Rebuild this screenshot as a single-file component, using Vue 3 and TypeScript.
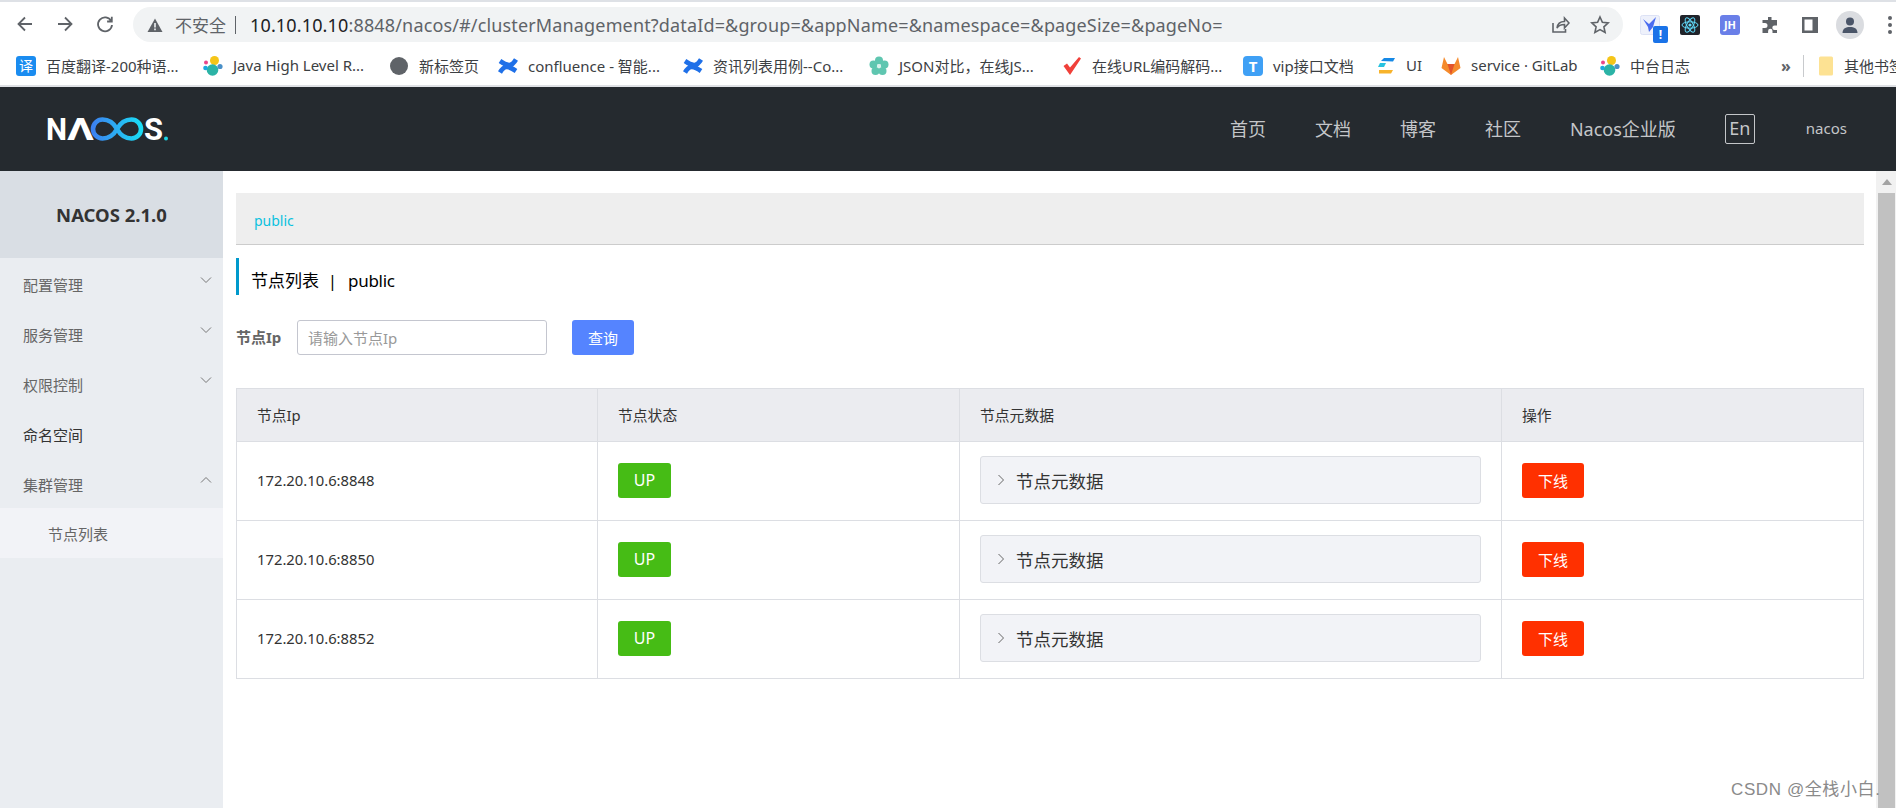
<template>
  <div class="page">
    <div class="tab-strip"></div>
    <div class="toolbar">
      <div class="nav-btns">
        <svg viewBox="0 0 20 20" class="nav-icon"><path d="M17 10H4M10 3.500 3.500 10l6.500 6.500" /></svg>
        <svg viewBox="0 0 20 20" class="nav-icon"><path d="M3 10h13M10 3.500l6.500 6.500-6.500 6.500" /></svg>
        <svg viewBox="0 0 20 20" class="nav-icon"><path d="M16.200 7A7 7 0 1 0 17 11M16.800 2.800V7.500h-4.700" /></svg>
      </div>
      <div class="address">
        <svg viewBox="0 0 16 16" class="warn"><path d="M8 1.500 15.500 15H.5z" fill="#5f6368" /><path d="M7.200 6h1.600v4.600H7.200zM7.200 11.600h1.600v1.600H7.200z" fill="#f1f3f4" /></svg>
        <span class="insecure">不安全</span>
        <span class="divider"></span>
        <span class="url"><b>10.10.10.10</b>:8848/nacos/#/clusterManagement?dataId=&amp;group=&amp;appName=&amp;namespace=&amp;pageSize=&amp;pageNo=</span>
        <svg viewBox="0 0 20 20" class="addr-icon"><path d="M3 8v9h12.500v-3M7 13c.5-4 3-6.500 7.500-6.500V3l4.500 5-4.500 5V9.500C11 9.500 8.500 10.500 7 13z" /></svg>
        <svg viewBox="0 0 20 20" class="addr-icon star"><path d="m10 2 2.400 5.300 5.800.6-4.300 3.900 1.200 5.700-5.100-2.900-5.100 2.900 1.200-5.700L1.800 7.900l5.800-.6z" /></svg>
      </div>
      <div class="ext-row">
        <div class="ext ext-bird">
          <svg viewBox="0 0 20 20"><rect x="0.500" y="0.500" width="19" height="19" rx="2" fill="#eef1fb" stroke="#dde2f5" /><path d="M3 4l6 5 7-7-3 10-4 5-1-5z" fill="#4a6cf0" /></svg>
          <span class="ext-badge">!</span>
        </div>
        <svg viewBox="0 0 20 20" class="ext"><rect width="20" height="20" rx="2" fill="#20232a" /><g fill="none" stroke="#61dafb" stroke-width="1"><ellipse cx="10" cy="10" rx="8" ry="3.200" /><ellipse cx="10" cy="10" rx="8" ry="3.200" transform="rotate(60 10 10)" /><ellipse cx="10" cy="10" rx="8" ry="3.200" transform="rotate(120 10 10)" /></g><circle cx="10" cy="10" r="1.600" fill="#61dafb" /></svg>
        <div class="ext ext-jh">JH</div>
        <svg viewBox="0 0 20 20" class="ext"><path d="M8 2h3.500v3H17v5.500h-2.500a2.200 2.200 0 0 0 0 4.400H17V18H12.500v-2a2.200 2.200 0 0 0-4.400 0v2H2.500v-5H5a2.500 2.500 0 0 0 0-5H2.500V5H8z" fill="#5f6368" /></svg>
        <svg viewBox="0 0 20 20" class="ext"><path d="M2 2h16v16H2zM12.500 4.500h-8v11h8z" fill="#5f6368" fill-rule="evenodd" /></svg>
        <div class="avatar">
          <svg viewBox="0 0 20 20"><circle cx="10" cy="6.500" r="4" fill="#4a5568" /><path d="M2.500 18c0-4.500 3.500-6 7.500-6s7.500 1.500 7.500 6z" fill="#4a5568" /></svg>
        </div>
        <div class="dots"><i></i><i></i><i></i></div>
      </div>
    </div>

    <div class="bookmarks">
      <div v-for="b in bookmarks" :key="b.text" class="bm" :style="{ width: b.w + 'px' }">
        <div v-if="b.kind === 'fanyi'" class="bm-icon bm-fanyi">译</div>
        <svg v-else-if="b.kind === 'elastic'" viewBox="0 0 20 20" class="bm-icon"><circle cx="11.500" cy="4.500" r="4.500" fill="#f5c518" /><circle cx="9.500" cy="14" r="5.800" fill="#2bb3a6" /><circle cx="3" cy="6.500" r="2" fill="#e8478b" /><circle cx="2.500" cy="12" r="2.300" fill="#1ba9e0" /><circle cx="17" cy="10.500" r="2.600" fill="#4a90c8" /></svg>
        <svg v-else-if="b.kind === 'circle'" viewBox="0 0 20 20" class="bm-icon"><circle cx="10" cy="10" r="9" fill="#5f6368" /></svg>
        <svg v-else-if="b.kind === 'confluence'" viewBox="0 0 20 20" class="bm-icon"><path d="M2 16.500C6 9.500 10 9.500 18 15M18 3.500C14 10.500 10 10.500 2 5" fill="none" stroke="#1f70e8" stroke-width="4.600" /></svg>
        <svg v-else-if="b.kind === 'flower'" viewBox="0 0 20 20" class="bm-icon"><g fill="#5fc6b0"><circle cx="10" cy="4.500" r="4" /><circle cx="4.500" cy="8.500" r="4" /><circle cx="15.500" cy="8.500" r="4" /><circle cx="6.500" cy="15" r="4" /><circle cx="13.500" cy="15" r="4" /></g><circle cx="10" cy="10" r="2" fill="#d8f2ec" /></svg>
        <svg v-else-if="b.kind === 'check'" viewBox="0 0 20 20" class="bm-icon"><path d="M1.500 10 5 7.500l3 4L17 1l2 1.500L8 19z" fill="#f0403a" /></svg>
        <div v-else-if="b.kind === 'tee'" class="bm-icon bm-tee">T</div>
        <svg v-else-if="b.kind === 'ui'" viewBox="0 0 20 20" class="bm-icon"><path d="M5 5 8 2h11l-2 3.500z" fill="#1689e6" /><path d="M2 11l2-4h6l-2 4z" fill="#27c2e0" /><path d="M3 14h14l-2 3.500H3z" fill="#f7b32b" /></svg>
        <svg v-else-if="b.kind === 'gitlab'" viewBox="0 0 20 20" class="bm-icon"><path d="M10 19 .5 12 3 1l3.500 7h7L17 1l2.500 11z" fill="#f58b2c" /><path d="M10 19 6.500 8h7z" fill="#e2532b" /></svg>
        <span class="bm-text">{{ b.text }}</span>
      </div>
      <span class="bm-more">»</span>
      <span class="bm-sep"></span>
      <svg viewBox="0 0 14 20" class="bm-folder"><path d="M0 2A1.500 1.500 0 0 1 1.500.5h11A1.500 1.500 0 0 1 14 2v16a1.500 1.500 0 0 1-1.500 1.500h-11A1.500 1.500 0 0 1 0 18z" fill="#fde293" /></svg>
      <span class="bm-text">其他书签</span>
    </div>

    <header class="topbar">
      <svg class="logo" viewBox="-4 -10 126 44" role="img" aria-label="NACOS">
        <defs>
          <linearGradient id="loop" x1="0" x2="1" y1="0" y2="0">
            <stop offset="0" stop-color="#3c82f0" />
            <stop offset="1" stop-color="#1adcf5" />
          </linearGradient>
        </defs>
        <text x="-2" y="23" class="logo-text" textLength="21" lengthAdjust="spacingAndGlyphs">N</text>
        <text x="19" y="23" class="logo-text" textLength="27" lengthAdjust="spacingAndGlyphs">Λ</text>
        <path d="M69 12C64 3 58 2.500 54.500 2.500a9.500 9.500 0 0 0 0 19C58 21.500 64 21 69 12s11-9.500 14.500-9.500a9.500 9.500 0 0 1 0 19C80 21.500 74 21 69 12z" fill="none" stroke="url(#loop)" stroke-width="4.600" />
        <text x="96" y="23" class="logo-text" textLength="19" lengthAdjust="spacingAndGlyphs">S</text>
        <circle cx="118" cy="21.500" r="2" fill="#1fd6e6" />
      </svg>
      <nav class="topnav">
        <a>首页</a>
        <a>文档</a>
        <a>博客</a>
        <a>社区</a>
        <a>Nacos企业版</a>
      </nav>
      <span class="lang">En</span>
      <span class="user">nacos</span>
    </header>

    <div class="body">
      <aside class="sidebar">
        <div class="side-title">NACOS 2.1.0</div>
        <div v-for="m in menu" :key="m.label" class="side-item" :class="{ plain: !m.arrow }">
          <span>{{ m.label }}</span>
          <svg v-if="m.arrow" viewBox="0 0 12 8" class="chev" :class="{ flip: m.arrow === 'up' }"><path d="M1 1.500 6 6.500l5-5" /></svg>
        </div>
        <div class="side-sub">节点列表</div>
      </aside>

      <main class="content">
        <div class="ns-bar"><a>public</a></div>
        <h1 class="title">节点列表&nbsp; |&nbsp; <span class="title-ns">public</span></h1>
        <div class="search">
          <label>节点Ip</label>
          <input type="text" placeholder="请输入节点Ip" />
          <button class="query">查询</button>
        </div>
        <table class="grid">
          <colgroup>
            <col class="c-ip" />
            <col class="c-state" />
            <col class="c-meta" />
            <col />
          </colgroup>
          <thead>
            <tr>
              <th>节点Ip</th>
              <th>节点状态</th>
              <th>节点元数据</th>
              <th>操作</th>
            </tr>
          </thead>
          <tbody>
            <tr v-for="n in nodes" :key="n">
              <td>{{ n }}</td>
              <td><span class="state-up">UP</span></td>
              <td>
                <div class="collapse">
                  <svg viewBox="0 0 8 12" class="arrow"><path d="M1.500 1 6.500 6l-5 5" /></svg>
                  <span>节点元数据</span>
                </div>
              </td>
              <td><button class="offline">下线</button></td>
            </tr>
          </tbody>
        </table>
      </main>

      <div class="scrollbar">
        <div class="sb-up"></div>
        <div class="sb-thumb"></div>
      </div>
    </div>

    <div class="watermark">CSDN @全栈小白.</div>
  </div>
</template>

<script setup lang="ts">
interface Bookmark {
  kind: string
  text: string
  w: number
}

interface MenuItem {
  label: string
  arrow?: 'up' | 'down'
}

const bookmarks: Bookmark[] = [
  { kind: 'fanyi', text: '百度翻译-200种语...', w: 187 },
  { kind: 'elastic', text: 'Java High Level R...', w: 186 },
  { kind: 'circle', text: '新标签页', w: 109 },
  { kind: 'confluence', text: 'confluence - 智能...', w: 185 },
  { kind: 'confluence', text: '资讯列表用例--Co...', w: 186 },
  { kind: 'flower', text: 'JSON对比，在线JS...', w: 193 },
  { kind: 'check', text: '在线URL编码解码...', w: 181 },
  { kind: 'tee', text: 'vip接口文档', w: 133 },
  { kind: 'ui', text: 'UI', w: 65 },
  { kind: 'gitlab', text: 'service · GitLab', w: 159 },
  { kind: 'elastic', text: '中台日志', w: 181 }
]

const menu: MenuItem[] = [
  { label: '配置管理', arrow: 'down' },
  { label: '服务管理', arrow: 'down' },
  { label: '权限控制', arrow: 'down' },
  { label: '命名空间' },
  { label: '集群管理', arrow: 'up' }
]

const nodes = ['172.20.10.6:8848', '172.20.10.6:8850', '172.20.10.6:8852']
</script>

<style>
html,
body {
  margin: 0;
  overflow: hidden;
}
</style>

<style scoped>
.page {
  position: relative;
  height: 808px;
  display: flex;
  flex-direction: column;
  overflow: hidden;
  background: #fff;
  font-family: "Noto Sans", "Noto Sans CJK SC", sans-serif;
}

.tab-strip {
  height: 2px;
  background: #dee1e6;
}

.toolbar {
  height: 45px;
  display: flex;
  align-items: flex-start;
  padding-top: 5px;
  box-sizing: border-box;
}

.nav-btns {
  width: 133px;
  padding-left: 15px;
  box-sizing: border-box;
  display: flex;
  gap: 20px;
  padding-top: 7px;
}

.nav-icon {
  width: 20px;
  height: 20px;
  fill: none;
  stroke: #5f6368;
  stroke-width: 1.8;
}

.address {
  width: 1490px;
  height: 35px;
  border-radius: 18px;
  background: #f1f3f4;
  display: flex;
  align-items: center;
  color: #5f6368;
}

.warn {
  width: 16px;
  height: 16px;
  margin-left: 14px;
}

.insecure {
  margin-left: 12px;
  font-size: 17px;
}

.divider {
  width: 1px;
  height: 18px;
  background: #5f6368;
  margin: 0 14px 0 9px;
}

.url {
  font-size: 18px;
  letter-spacing: 0.15px;
  flex: 1;
  white-space: nowrap;
}

.url b {
  font-weight: 400;
  color: #202124;
}

.addr-icon {
  width: 20px;
  height: 20px;
  fill: none;
  stroke: #5f6368;
  stroke-width: 1.6;
  margin-right: 20px;
}

.star {
  margin-right: 13px;
}

.ext-row {
  display: flex;
  align-items: center;
  height: 35px;
  margin-left: 17px;
  gap: 20px;
}

.ext {
  width: 20px;
  height: 20px;
  flex: none;
}

.ext-bird {
  position: relative;
}

.ext-bird svg {
  display: block;
}

.ext-badge {
  position: absolute;
  right: -8px;
  bottom: -8px;
  width: 15px;
  height: 17px;
  border-radius: 2px;
  background: #1a73e8;
  color: #fff;
  font-size: 12px;
  font-weight: 700;
  line-height: 17px;
  text-align: center;
}

.ext-jh {
  border-radius: 3px;
  background: #6a7fe8;
  color: #fff;
  font-size: 11px;
  font-weight: 700;
  line-height: 20px;
  text-align: center;
}

.avatar {
  width: 28px;
  height: 28px;
  margin-left: -4px;
  border-radius: 50%;
  background: #dadce0;
  display: flex;
  align-items: center;
  justify-content: center;
}

.avatar svg {
  width: 20px;
  height: 20px;
}

.dots {
  display: flex;
  flex-direction: column;
  gap: 3px;
  margin-left: 4px;
}

.dots i {
  width: 4px;
  height: 4px;
  border-radius: 50%;
  background: #5f6368;
}

.bookmarks {
  height: 38px;
  padding-left: 16px;
  display: flex;
  align-items: center;
  border-bottom: 2px solid #dfe1e5;
  font-size: 15px;
  color: #3c4043;
}

.bm {
  display: flex;
  align-items: center;
  gap: 10px;
  flex: none;
}

.bm-icon {
  width: 20px;
  height: 20px;
  flex: none;
}

.bm-fanyi {
  border-radius: 3px;
  background: #1a8cf0;
  color: #fff;
  font-size: 14px;
  line-height: 20px;
  text-align: center;
}

.bm-tee {
  border-radius: 4px;
  background: #3fa0f5;
  color: #fff;
  font-size: 15px;
  font-weight: 700;
  line-height: 20px;
  text-align: center;
}

.bm-text {
  margin-top: -2px;
  white-space: nowrap;
}

.bm-more {
  width: 22px;
  flex: none;
  font-size: 16px;
  font-weight: 700;
  color: #5f6368;
}

.bm-sep {
  width: 1px;
  height: 22px;
  flex: none;
  background: #c8cacd;
  margin-right: 15px;
}

.bm-folder {
  width: 14px;
  height: 20px;
  margin-right: 11px;
  flex: none;
}

.topbar {
  height: 84px;
  flex: none;
  background: #252a2f;
  display: flex;
  align-items: center;
  padding-left: 44px;
  color: #c4c6c9;
}

.logo {
  width: 126px;
  height: 44px;
}

.logo-text {
  font-family: Roboto, sans-serif;
  font-size: 32px;
  font-weight: 700;
  fill: #fff;
}

.topnav {
  margin-left: auto;
  display: flex;
  gap: 49px;
  margin-top: -3px;
  font-size: 18px;
}

.lang {
  margin-left: 49px;
  width: 30px;
  height: 30px;
  box-sizing: border-box;
  border: 1px solid #c4c6c9;
  border-radius: 2px;
  font-size: 18px;
  line-height: 26px;
  text-align: center;
}

.user {
  margin-left: 51px;
  margin-right: 49px;
  font-size: 15px;
  margin-top: -2px;
}

.body {
  flex: 1;
  display: flex;
  min-height: 0;
}

.sidebar {
  width: 223px;
  flex: none;
  background: #eaedf1;
  font-size: 15px;
  color: #666;
}

.side-title {
  height: 87px;
  background: #d9dee4;
  color: #333;
  font-size: 18.500px;
  font-weight: 700;
  line-height: 87px;
  text-align: center;
}

.side-item {
  height: 50px;
  padding: 0 11px 0 23px;
  display: flex;
  align-items: center;
  justify-content: space-between;
}

.side-item span {
  margin-top: 2px;
}

.side-item.plain {
  color: #333;
}

.chev {
  width: 12px;
  height: 8px;
  margin-top: -6px;
  fill: none;
  stroke: #777;
  stroke-width: 1;
}

.chev.flip {
  transform: rotate(180deg);
}

.side-sub {
  height: 50px;
  padding-left: 48px;
  background: #f2f3f7;
  line-height: 52px;
}

.content {
  flex: 1;
  min-width: 0;
  padding: 22px 12px 0 13px;
}

.ns-bar {
  height: 52px;
  box-sizing: border-box;
  padding: 18px 0 0 18px;
  background: #eee;
  border-bottom: 1px solid #ccc;
  font-size: 14px;
  line-height: 20px;
  color: #09c1de;
}

.title {
  margin: 13px 0 0;
  height: 37px;
  box-sizing: border-box;
  padding: 8px 0 0 12px;
  border-left: 3px solid #09c;
  font-size: 17px;
  font-weight: 400;
  line-height: 29px;
  color: #000;
}

.title-ns {
  margin-left: 2px;
  letter-spacing: -0.3px;
}

.search {
  margin-top: 25px;
  display: flex;
  align-items: center;
  height: 35px;
}

.search label {
  width: 61px;
  margin-top: -2px;
  font-size: 15px;
  font-weight: 700;
  color: #666;
}

.search input {
  width: 250px;
  height: 35px;
  box-sizing: border-box;
  padding: 0 10px;
  border: 1px solid #c4c6cf;
  border-radius: 3px;
  font-family: inherit;
  font-size: 15px;
  outline: none;
}

.search input::placeholder {
  color: #999;
}

.query {
  margin-left: 25px;
  width: 62px;
  height: 35px;
  border: none;
  border-radius: 3px;
  background: #5584ff;
  color: #fff;
  font-family: inherit;
  font-size: 15px;
}

.grid {
  margin-top: 33px;
  width: 100%;
  table-layout: fixed;
  border-collapse: collapse;
  font-size: 14.800px;
  color: #333;
}

.c-ip {
  width: 361px;
}

.c-state {
  width: 362px;
}

.c-meta {
  width: 542px;
}

.grid th,
.grid td {
  border: 1px solid #dcdee3;
  padding: 0 20px;
  text-align: left;
  font-weight: 400;
}

.grid th {
  height: 50px;
  padding-bottom: 2px;
  background: #ebecf0;
}

.grid td {
  height: 76px;
  padding-bottom: 2px;
}

.state-up {
  display: block;
  width: 53px;
  height: 35px;
  border-radius: 3px;
  background: #46bc15;
  color: #fff;
  font-size: 16px;
  line-height: 35px;
  text-align: center;
}

.collapse {
  height: 48px;
  box-sizing: border-box;
  padding-left: 16px;
  display: flex;
  align-items: center;
  gap: 11px;
  border: 1px solid #dcdee3;
  border-radius: 3px;
  background: #f2f3f7;
  font-size: 17.500px;
}

.arrow {
  width: 8px;
  height: 12px;
  fill: none;
  stroke: #666;
  stroke-width: 1;
}

.offline {
  display: block;
  width: 62px;
  height: 35px;
  border: none;
  border-radius: 3px;
  background: #ff3000;
  color: #fff;
  font-family: inherit;
  font-size: 15px;
}

.scrollbar {
  width: 20px;
  flex: none;
  background: #f1f1f1;
  box-sizing: border-box;
  padding: 0 1px 0 2px;
}

.sb-up {
  height: 22px;
  position: relative;
}

.sb-up::before {
  content: "";
  position: absolute;
  left: 4px;
  top: 8px;
  border-left: 5px solid transparent;
  border-right: 5px solid transparent;
  border-bottom: 6px solid #a3a3a3;
}

.sb-thumb {
  height: 615px;
  background: #c1c1c1;
}

.watermark {
  position: absolute;
  left: 1731px;
  top: 780px;
  font-family: "Liberation Sans", "Noto Sans CJK SC", sans-serif;
  font-size: 17px;
  letter-spacing: 0.6px;
  line-height: 20px;
  color: #8a8a8a;
}
</style>
